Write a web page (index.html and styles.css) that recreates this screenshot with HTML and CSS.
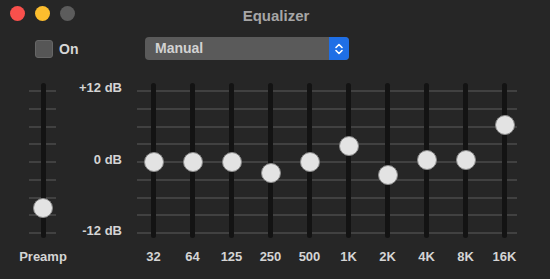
FILE: index.html
```html
<!DOCTYPE html>
<html lang="en">
<head>
    <meta charset="UTF-8">
    <title>Equalizer</title>
    <link rel="stylesheet" href="styles.css">
</head>
<body>
    <div class="window">
        <div class="titlebar">
            <div class="lights">
                <span class="light close"></span>
                <span class="light minimize"></span>
                <span class="light zoom"></span>
            </div>
            <div class="title">Equalizer</div>
        </div>

        <div class="controls">
            <label class="toggle"><span class="checkbox"></span>On</label>
            <div class="popup">
                <span class="popup-value">Manual</span>
                <span class="popup-arrows">
                    <svg width="10" height="14" viewBox="0 0 10 14">
                        <path d="M2 5.5 L5 2.5 L8 5.5 M2 8.5 L5 11.5 L8 8.5" fill="none" stroke="#fff" stroke-width="1.6" stroke-linecap="round" stroke-linejoin="round"/>
                    </svg>
                </span>
            </div>
        </div>

        <div class="eq">
            <div class="preamp">
                <div class="slider-stack">
                    <div class="ticks preamp-ticks">
                        <i></i><i></i><i></i><i></i><i></i><i></i><i></i><i></i><i></i>
                    </div>
                    <div class="column">
                        <div class="track"><span class="knob" style="--db: -7.9"></span></div>
                    </div>
                </div>
                <div class="label">Preamp</div>
            </div>

            <div class="scale">
                <span>+12 dB</span>
                <span>0 dB</span>
                <span>-12 dB</span>
            </div>

            <div class="bands">
                <div class="slider-stack">
                    <div class="ticks band-ticks">
                        <i></i><i></i><i></i><i></i><i></i><i></i><i></i><i></i><i></i>
                    </div>
                    <div class="band-row">
                        <div class="column"><div class="track"><span class="knob" style="--db: 0"></span></div></div>
                        <div class="column"><div class="track"><span class="knob" style="--db: 0"></span></div></div>
                        <div class="column"><div class="track"><span class="knob" style="--db: 0"></span></div></div>
                        <div class="column"><div class="track"><span class="knob" style="--db: -2"></span></div></div>
                        <div class="column"><div class="track"><span class="knob" style="--db: 0"></span></div></div>
                        <div class="column"><div class="track"><span class="knob" style="--db: 2.7"></span></div></div>
                        <div class="column"><div class="track"><span class="knob" style="--db: -2.2"></span></div></div>
                        <div class="column"><div class="track"><span class="knob" style="--db: 0.2"></span></div></div>
                        <div class="column"><div class="track"><span class="knob" style="--db: 0.2"></span></div></div>
                        <div class="column"><div class="track"><span class="knob" style="--db: 6.2"></span></div></div>
                    </div>
                </div>
                <div class="band-labels">
                    <span>32</span><span>64</span><span>125</span><span>250</span><span>500</span>
                    <span>1K</span><span>2K</span><span>4K</span><span>8K</span><span>16K</span>
                </div>
            </div>
        </div>
    </div>
</body>
</html>
```

FILE: styles.css
```css
body {
    margin: 0;
    background: #262626;
    font-family: "Liberation Sans", Arial, sans-serif;
    font-weight: bold;
    color: #d4d4d4;
}
.window {
    width: 550px;
    height: 279px;
    background: #262626;
    overflow: hidden;
}
.titlebar {
    height: 28px;
    display: grid;
    grid-template-columns: 1fr;
    align-items: center;
}
.lights, .title {
    grid-area: 1 / 1;
}
.lights {
    display: flex;
    gap: 10px;
    padding-left: 10px;
    margin-top: -2px;
}
.light {
    width: 15px;
    height: 15px;
    border-radius: 50%;
}
.close { background: #f9504c; }
.minimize { background: #fcbd2e; }
.zoom { background: #5c5c5c; }
.title {
    text-align: center;
    font-size: 15px;
    color: #a6a6a6;
    padding-left: 2px;
    margin-top: 2px;
}

.controls {
    display: flex;
    align-items: center;
    height: 23px;
    margin-top: 9px;
    padding-left: 35px;
}
.toggle {
    display: flex;
    align-items: center;
    gap: 6px;
    font-size: 14px;
    color: #d6d6d6;
    width: 110px;
}
.checkbox {
    width: 16px;
    height: 16px;
    border-radius: 3px;
    background: #565656;
    border: 1px solid #666;
}
.popup {
    display: flex;
    width: 204px;
    height: 23px;
    border-radius: 4px;
    background: #5a5a5a;
    overflow: hidden;
}
.popup-value {
    flex: 1;
    padding-left: 10px;
    font-size: 14px;
    line-height: 23px;
    color: #d2d2d2;
}
.popup-arrows {
    width: 20px;
    background: #1f6fe6;
    display: flex;
    align-items: center;
    justify-content: center;
}

.eq {
    display: flex;
    margin-top: 23px;
    padding-left: 29px;
}
.slider-stack {
    display: grid;
    height: 155px;
}
.slider-stack > * {
    grid-area: 1 / 1;
}
.ticks {
    display: flex;
    flex-direction: column;
    justify-content: space-between;
    padding: 7px 0 4px;
    box-sizing: border-box;
    height: 155px;
}
.ticks i {
    display: block;
    height: 2px;
    background: #414141;
}
.preamp {
    width: 28px;
    display: flex;
    flex-direction: column;
    align-items: center;
}
.preamp-ticks {
    width: 27px;
}
.preamp .slider-stack {
    width: 28px;
}
.column {
    display: flex;
    justify-content: center;
}
.track {
    position: relative;
    width: 5px;
    height: 155px;
    border-radius: 3px;
    background: #131313;
}
.knob {
    position: absolute;
    left: -7.5px;
    top: calc(8px + (12 - var(--db)) * 5.9167px - 10.5px);
    width: 18px;
    height: 18px;
    border-radius: 50%;
    background: #e3e3e3;
    border: 1px solid #8a8a8a;
    box-sizing: content-box;
}
.label, .band-labels span {
    font-size: 13px;
    line-height: 16px;
    margin-top: 11px;
    white-space: nowrap;
    color: #d4d4d4;
}
.scale {
    width: 65px;
    height: 157px;
    margin-top: -2px;
    margin-right: 12px;
    display: flex;
    flex-direction: column;
    justify-content: space-between;
    align-items: flex-end;
    font-size: 13px;
    line-height: 14px;
    color: #d4d4d4;
}
.scale span:nth-child(2) {
    margin-top: 1px;
}
.bands {
    width: 390px;
}
.band-ticks {
    margin-left: 3px;
    width: 380px;
}
.band-row, .band-labels {
    display: grid;
    grid-template-columns: repeat(10, 39px);
}
.band-labels span {
    text-align: center;
}
```
